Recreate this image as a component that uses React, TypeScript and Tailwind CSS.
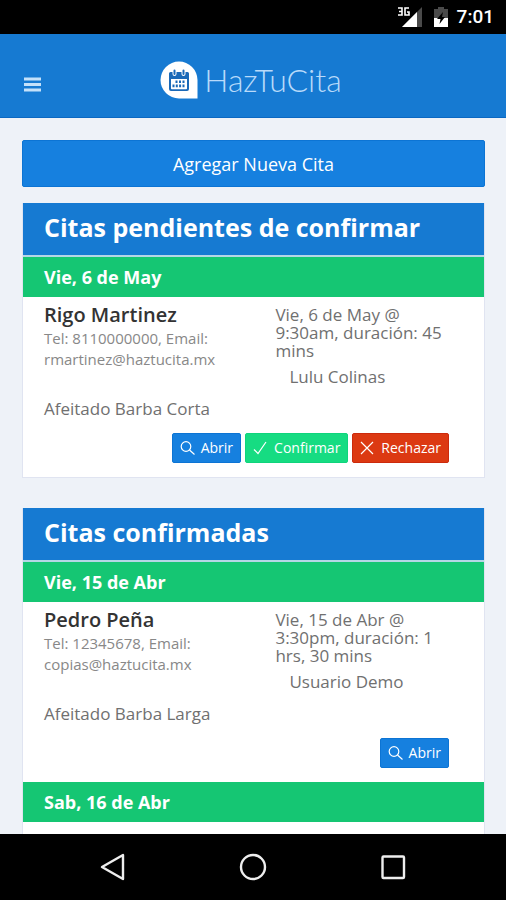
import type { ReactNode } from 'react';

type Appointment = {
    name: string;
    phone: string;
    email: string;
    when: string;
    employee: string;
    service: string;
    pending?: boolean;
};

type Day = {
    label: string;
    appointments: Appointment[];
};

const pending: Day[] = [
    {
        label: 'Vie, 6 de May',
        appointments: [
            {
                name: 'Rigo Martinez',
                phone: '8110000000',
                email: 'rmartinez@haztucita.mx',
                when: 'Vie, 6 de May @ 9:30am, duración: 45 mins',
                employee: 'Lulu Colinas',
                service: 'Afeitado Barba Corta',
                pending: true,
            },
        ],
    },
];

const confirmed: Day[] = [
    {
        label: 'Vie, 15 de Abr',
        appointments: [
            {
                name: 'Pedro Peña',
                phone: '12345678',
                email: 'copias@haztucita.mx',
                when: 'Vie, 15 de Abr @ 3:30pm, duración: 1 hrs, 30 mins',
                employee: 'Usuario Demo',
                service: 'Afeitado Barba Larga',
            },
        ],
    },
    { label: 'Sab, 16 de Abr', appointments: [] },
];

function StatusBar() {
    return (
        <div className="flex h-[34px] shrink-0 items-center justify-end bg-black pr-3 text-white">
            <svg width="26" height="22" viewBox="0 0 26 22" aria-hidden="true">
                <path d="M25 1v20H5z" fill="#4a4a4a" />
                <path d="M20 6v15H5z" fill="#fff" />
                <g fill="none" stroke="#000" strokeWidth="4">
                    <path d="M1 2h4v7H1M2 5.500h3M12 2H8v7h4V6h-2" />
                </g>
                <g fill="none" stroke="#fff" strokeWidth="1.6">
                    <path d="M1 2h4v7H1M2 5.500h3M12 2H8v7h4V6h-2" />
                </g>
            </svg>
            <svg
                className="ml-2.5"
                width="16"
                height="22"
                viewBox="0 0 16 22"
                aria-hidden="true"
            >
                <path d="M5 1h6v2h4v18H1V3h4z" fill="#4a4a4a" />
                <path d="M1 12h14v9H1z" fill="#fff" />
                <path d="M10 6 4 13h3.500l-1 5 5.500-7H9z" fill="#000" />
            </svg>
            <span className="ml-2 font-['Roboto'] text-[19px] leading-6 font-medium">
                7:01
            </span>
        </div>
    );
}

function Logo() {
    return (
        <a href="#" className="mr-1 flex items-center gap-1.5 text-white">
            <svg width="38" height="38" viewBox="0 0 38 38" aria-hidden="true">
                <path
                    d="M19 0.500A18.500 18.500 0 0 1 37.500 19v18.500H19A18.500 18.500 0 0 1 19 0.500z"
                    fill="#fff"
                />
                <path
                    d="M9 12.500q0-1.500 1.500-1.500h2v2a2 2 0 0 0 4 0v-2h5v2a2 2 0 0 0 4 0v-2h2q1.500 0 1.500 1.500V28q0 2-2 2H11q-2 0-2-2z"
                    fill="#1a69b8"
                />
                <path
                    d="M14.500 9.500v3.500M23.500 9.500v3.500"
                    stroke="#1a69b8"
                    strokeWidth="2"
                    strokeLinecap="round"
                />
                <path d="M11 18h16v9.500q0 .800-.800.800H11.800q-.800 0-.800-.800z" fill="#fff" />
                <path
                    d="M15.500 19.500h2v2.500h-2zM19 19.500h2v2.500h-2zM22.500 19.500h2v2.500h-2zM12.500 23.500h2v2.800h-2zM15.800 23.500h2v2.800h-2zM19.100 23.500h2v2.800h-2zM22.500 23.500h2v2.800h-2z"
                    fill="#1a69b8"
                />
            </svg>
            <span className="font-['Lato'] text-[32px] leading-9 font-light text-[#b9dafa]">
                HazTuCita
            </span>
        </a>
    );
}

function Header() {
    return (
        <header className="grid h-[84px] shrink-0 grid-cols-[1fr_auto_1fr] items-center border-b border-[#0b68c2] bg-[#167ad2] pt-2">
            <button type="button" aria-label="Menú" className="mt-2 ml-6 w-fit">
                <svg width="17" height="16" viewBox="0 0 17 16">
                    <path
                        d="M0 3h17M0 8.500h17M0 14h17"
                        stroke="#c4e1fa"
                        strokeWidth="3"
                    />
                </svg>
            </button>
            <Logo />
        </header>
    );
}

function SmallButton({
    color,
    icon,
    children,
}: {
    color: string;
    icon: ReactNode;
    children: ReactNode;
}) {
    return (
        <button
            type="button"
            className={`flex h-[30px] items-center gap-1.5 rounded-xs border px-[7px] text-[14px] leading-5 font-medium text-white ${color}`}
        >
            <svg
                width="15"
                height="15"
                viewBox="0 0 15 15"
                fill="none"
                stroke="currentColor"
                strokeWidth="1.2"
                aria-hidden="true"
            >
                {icon}
            </svg>
            {children}
        </button>
    );
}

function AppointmentRow({ item }: { item: Appointment }) {
    return (
        <div className="pt-[7px] pr-[35px] pb-[14px] pl-[21px]">
            <div className="grid grid-cols-[4fr_3fr]">
                <div className="pr-6">
                    <h3 className="text-[20px] leading-[22px] font-semibold text-[#333]">
                        {item.name}
                    </h3>
                    <p className="mt-0.5 text-[15px] leading-[21px] text-[#888]">
                        Tel: {item.phone}, Email: {item.email}
                    </p>
                </div>
                <div className="pt-0.5 text-[#707070]">
                    <p className="text-[17px] leading-[18px]">{item.when}</p>
                    <p className="mt-1.5 pl-[14px] text-[17px] leading-[22px]">
                        {item.employee}
                    </p>
                </div>
            </div>
            <p className="mt-2.5 text-[17px] leading-[22px] text-[#707070]">
                {item.service}
            </p>
            <div className="mt-[13px] flex justify-end gap-1">
                <SmallButton
                    color="border-[#0c74d4] bg-[#1680df]"
                    icon={
                        <>
                            <circle cx="6" cy="5.500" r="4.800" />
                            <path d="m9.500 9 5 4.500" />
                        </>
                    }
                >
                    Abrir
                </SmallButton>
                {item.pending && (
                    <>
                        <SmallButton
                            color="border-[#0fd47c] bg-[#16dc82]"
                            icon={<path d="m1 8.500 4 4L13 1" />}
                        >
                            Confirmar
                        </SmallButton>
                        <SmallButton
                            color="border-[#cc2a0c] bg-[#dc3912]"
                            icon={<path d="m1 1 12 12M13 1 1 13" />}
                        >
                            Rechazar
                        </SmallButton>
                    </>
                )}
            </div>
        </div>
    );
}

function Panel({ title, days }: { title: string; days: Day[] }) {
    return (
        <section className="border border-t-0 border-[#e0e4f1] bg-white">
            <h1 className="border-b-2 border-[#b5d6e6] bg-[#167ad2] pb-1 pl-[21px] text-[25px] leading-[48px] font-bold text-white">
                {title}
            </h1>
            {days.map((day) => (
                <div key={day.label}>
                    <h2 className="bg-[#15c673] pl-[21px] text-[18px] leading-10 font-bold text-white">
                        {day.label}
                    </h2>
                    {day.appointments.map((item) => (
                        <AppointmentRow key={item.name} item={item} />
                    ))}
                    {day.appointments.length === 0 && <div className="h-20" />}
                </div>
            ))}
        </section>
    );
}

function NavBar() {
    return (
        <nav className="flex h-[66px] shrink-0 items-center justify-center gap-28 bg-black text-[#eee]">
            <button type="button" aria-label="Atrás">
                <svg width="28" height="28" viewBox="0 0 28 28">
                    <path
                        d="M24 2v24L3 14z"
                        fill="none"
                        stroke="currentColor"
                        strokeWidth="2.4"
                        strokeLinejoin="round"
                    />
                </svg>
            </button>
            <button type="button" aria-label="Inicio">
                <svg width="28" height="28" viewBox="0 0 28 28">
                    <circle
                        cx="14"
                        cy="14"
                        r="12"
                        fill="none"
                        stroke="currentColor"
                        strokeWidth="2.4"
                    />
                </svg>
            </button>
            <button type="button" aria-label="Recientes">
                <svg width="28" height="28" viewBox="0 0 28 28">
                    <rect
                        x="3.500"
                        y="3.500"
                        width="21.500"
                        height="21.500"
                        rx="1"
                        fill="none"
                        stroke="currentColor"
                        strokeWidth="2.4"
                    />
                </svg>
            </button>
        </nav>
    );
}

export default function App() {
    return (
        <div className="flex h-screen flex-col font-['Open_Sans',sans-serif]">
            <StatusBar />
            <Header />
            <main className="min-h-0 flex-1 overflow-hidden bg-[#eef2f8] pt-[22px] pr-[21px] pl-[22px]">
                <button
                    type="button"
                    className="h-[47px] w-full rounded-xs border border-[#0c74d4] bg-[#1680df] text-[18px] leading-6 text-white"
                >
                    Agregar Nueva Cita
                </button>
                <div className="mt-4 space-y-[30px]">
                    <Panel title="Citas pendientes de confirmar" days={pending} />
                    <Panel title="Citas confirmadas" days={confirmed} />
                </div>
            </main>
            <NavBar />
        </div>
    );
}
